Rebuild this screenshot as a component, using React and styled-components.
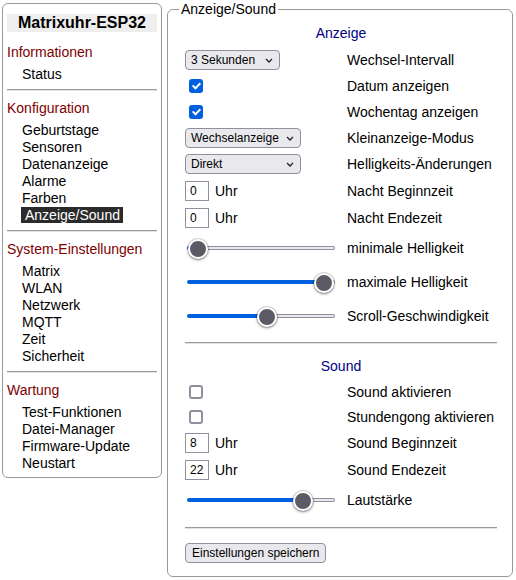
import React from "react";
import styled, { createGlobalStyle } from "styled-components";

const GlobalStyle = createGlobalStyle`
  html, body {
    margin: 0;
    padding: 0;
    background: #fff;
  }
  body {
    font-family: "Liberation Sans", Arial, sans-serif;
    font-size: 14px;
    color: #000;
  }
`;

const menu = [
  { title: "Informationen", items: ["Status"] },
  {
    title: "Konfiguration",
    items: ["Geburtstage", "Sensoren", "Datenanzeige", "Alarme", "Farben", "Anzeige/Sound"],
  },
  {
    title: "System-Einstellungen",
    items: ["Matrix", "WLAN", "Netzwerk", "MQTT", "Zeit", "Sicherheit"],
  },
  { title: "Wartung", items: ["Test-Funktionen", "Datei-Manager", "Firmware-Update", "Neustart"] },
];

export default function App() {
  return (
    <>
      <GlobalStyle />
      <Page>
        <Sidebar>
          <Title>Matrixuhr-ESP32</Title>
          {menu.map((section, i) => (
            <React.Fragment key={section.title}>
              {i > 0 && <Separator />}
              <SectionTitle>{section.title}</SectionTitle>
              <ItemList>
                {section.items.map((item) => (
                  <Item key={item}>
                    {item === "Anzeige/Sound" ? <ActiveItem>{item}</ActiveItem> : item}
                  </Item>
                ))}
              </ItemList>
            </React.Fragment>
          ))}
        </Sidebar>

        <Panel>
          <Legend>Anzeige/Sound</Legend>
          <Content>
            <Heading $h={26}>Anzeige</Heading>

            <Row $h={27}>
              <Cell>
                <Dropdown width={95} value="3 Sekunden" />
              </Cell>
              <Label>Wechsel-Intervall</Label>
            </Row>
            <Row $h={26}>
              <Cell>
                <Check type="checkbox" defaultChecked />
              </Cell>
              <Label>Datum anzeigen</Label>
            </Row>
            <Row $h={26}>
              <Cell>
                <Check type="checkbox" defaultChecked />
              </Cell>
              <Label>Wochentag anzeigen</Label>
            </Row>
            <Row $h={26}>
              <Cell>
                <Dropdown width={116} value="Wechselanzeige" />
              </Cell>
              <Label>Kleinanzeige-Modus</Label>
            </Row>
            <Row $h={26}>
              <Cell>
                <Dropdown width={116} value="Direkt" />
              </Cell>
              <Label>Helligkeits-Änderungen</Label>
            </Row>
            <Row $h={27}>
              <Cell>
                <HourInput type="text" defaultValue="0" />
                <Unit>Uhr</Unit>
              </Cell>
              <Label>Nacht Beginnzeit</Label>
            </Row>
            <Row $h={27}>
              <Cell>
                <HourInput type="text" defaultValue="0" />
                <Unit>Uhr</Unit>
              </Cell>
              <Label>Nacht Endezeit</Label>
            </Row>
            <Row $h={34}>
              <Cell>
                <Slider value={0} />
              </Cell>
              <Label>minimale Helligkeit</Label>
            </Row>
            <Row $h={34}>
              <Cell>
                <Slider value={100} />
              </Cell>
              <Label>maximale Helligkeit</Label>
            </Row>
            <Row $h={33}>
              <Cell>
                <Slider value={55} />
              </Cell>
              <Label>Scroll-Geschwindigkeit</Label>
            </Row>

            <Rule $h={22} />

            <Heading $h={25}>Sound</Heading>
            <Row $h={25}>
              <Cell>
                <Check type="checkbox" />
              </Cell>
              <Label>Sound aktivieren</Label>
            </Row>
            <Row $h={25}>
              <Cell>
                <Check type="checkbox" />
              </Cell>
              <Label>Stundengong aktivieren</Label>
            </Row>
            <Row $h={27}>
              <Cell>
                <HourInput type="text" defaultValue="8" />
                <Unit>Uhr</Unit>
              </Cell>
              <Label>Sound Beginnzeit</Label>
            </Row>
            <Row $h={27}>
              <Cell>
                <HourInput type="text" defaultValue="22" />
                <Unit>Uhr</Unit>
              </Cell>
              <Label>Sound Endezeit</Label>
            </Row>
            <Row $h={33}>
              <Cell>
                <Slider value={83} />
              </Cell>
              <Label>Lautstärke</Label>
            </Row>

            <Rule $h={24} />

            <ButtonRow>
              <SaveButton type="button">Einstellungen speichern</SaveButton>
            </ButtonRow>
          </Content>
        </Panel>
      </Page>
    </>
  );
}

function Dropdown({ width, value }) {
  return (
    <SelectWrap $w={width}>
      <Select defaultValue={value}>
        <option>{value}</option>
      </Select>
      <Chevron width="8" height="5" viewBox="0 0 8 5">
        <polyline points="1,1 4,4 7,1" fill="none" stroke="#222" strokeWidth="1.3" />
      </Chevron>
    </SelectWrap>
  );
}

function Slider({ value }) {
  // blue fill ends at thumb centre: track 148px, thumb 20px
  const pct = ((10 + (value / 100) * 128) / 148) * 100;
  return <Range type="range" min="0" max="100" defaultValue={value} style={{ "--pct": `${pct}%` }} />;
}

const Page = styled.div`
  display: flex;
  align-items: flex-start;
  gap: 5px;
  width: 516px;
  box-sizing: border-box;
  padding: 0 3px 0 2px;
`;

const Sidebar = styled.nav`
  flex: none;
  width: 160px;
  box-sizing: border-box;
  margin-top: 3px;
  padding: 10px 4px 5px;
  border: 1px solid #999;
  border-radius: 6px;
`;

const Title = styled.div`
  height: 18px;
  line-height: 18px;
  background: #eee;
  text-align: center;
  font-size: 16px;
  font-weight: bold;
  margin-bottom: 10px;
`;

const SectionTitle = styled.div`
  line-height: 20px;
  color: #800000;
  margin-bottom: 4px;
`;

const ItemList = styled.div`
  padding-left: 15px;
`;

const Item = styled.div`
  line-height: 17px;
`;

const ActiveItem = styled.span`
  display: inline-block;
  margin-left: -1px;
  padding: 0 3px 0 4px;
  line-height: 16px;
  background: #2b2b2b;
  color: #fff;
`;

const Separator = styled.div`
  margin: 6px 0 7px;
  border-top: 1px solid #9a9a9a;
  border-bottom: 1px solid #e2e2e2;
`;

const Panel = styled.fieldset`
  flex: 1;
  min-width: 0;
  margin: 1px 0 0;
  padding: 0 15px 10px 17px;
  border: 1px solid #999;
  border-radius: 6px;
`;

const Legend = styled.legend`
  margin-left: -6px;
  padding: 0 2px;
  font-size: 14px;
  line-height: 16px;
`;

const Content = styled.div`
  display: flex;
  flex-direction: column;
  padding-top: 3px;
`;

const Heading = styled.div`
  height: ${(p) => p.$h}px;
  line-height: ${(p) => p.$h}px;
  text-align: center;
  color: #000080;
`;

const Row = styled.div`
  display: grid;
  grid-template-columns: 162px 1fr;
  align-items: center;
  height: ${(p) => p.$h}px;
`;

const Cell = styled.div`
  display: flex;
  align-items: center;
`;

const Label = styled.div`
  white-space: nowrap;
`;

const Rule = styled.div`
  display: flex;
  align-items: center;
  height: ${(p) => p.$h}px;

  &::before {
    content: "";
    flex: 1;
    border-top: 1px solid #9a9a9a;
    border-bottom: 1px solid #e2e2e2;
  }
`;

const SelectWrap = styled.span`
  position: relative;
  display: inline-flex;
  width: ${(p) => p.$w}px;
`;

const Select = styled.select`
  appearance: none;
  width: 100%;
  height: 20px;
  box-sizing: border-box;
  margin: 0;
  padding: 0 18px 0 5px;
  font: 12px "Liberation Sans", Arial, sans-serif;
  color: #000;
  background: #e9e9ed;
  border: 1px solid #8f8f9d;
  border-radius: 4px;
  outline: none;
`;

const Chevron = styled.svg`
  position: absolute;
  right: 7px;
  top: 8px;
  pointer-events: none;
`;

const Check = styled.input`
  appearance: none;
  position: relative;
  width: 14px;
  height: 14px;
  box-sizing: border-box;
  margin: 0 0 0 4px;
  background: #fff;
  border: 2px solid #8f8f9d;
  border-radius: 3px;

  &:checked {
    background: #0060df;
    border-color: #0060df;
  }

  &:checked::after {
    content: "";
    position: absolute;
    left: 3px;
    top: 0px;
    width: 3px;
    height: 6px;
    border: solid #fff;
    border-width: 0 2px 2px 0;
    transform: rotate(45deg);
  }
`;

const HourInput = styled.input`
  width: 24px;
  height: 20px;
  box-sizing: border-box;
  margin: 0;
  padding: 0 0 0 4px;
  font: 12px "Liberation Sans", Arial, sans-serif;
  color: #000;
  border: 1px solid #8f8f9d;
  border-radius: 0;
  outline: none;
`;

const Unit = styled.span`
  margin-left: 6px;
`;

const Range = styled.input`
  -webkit-appearance: none;
  appearance: none;
  width: 148px;
  height: 22px;
  margin: 0 0 0 2px;
  background: transparent;

  &::-webkit-slider-runnable-track {
    height: 4px;
    border: 1px solid transparent;
    border-radius: 3px;
    background:
      linear-gradient(to right, #0060df var(--pct), transparent var(--pct)) border-box,
      linear-gradient(#e9e9ed, #e9e9ed) padding-box,
      linear-gradient(#8f8f9d, #8f8f9d) border-box;
  }

  &::-webkit-slider-thumb {
    -webkit-appearance: none;
    box-sizing: border-box;
    width: 20px;
    height: 20px;
    margin-top: -8px;
    border-radius: 50%;
    background: #5b5b66;
    border: 2px solid #fff;
    box-shadow: 0 0 0 1px rgba(0, 0, 0, 0.12), 0 1px 3px rgba(0, 0, 0, 0.45);
  }
`;

const ButtonRow = styled.div`
  display: flex;
  align-items: center;
  height: 26px;
`;

const SaveButton = styled.button`
  height: 20px;
  box-sizing: border-box;
  margin: 0;
  padding: 0 6px;
  font: 12px "Liberation Sans", Arial, sans-serif;
  color: #000;
  background: #e9e9ed;
  border: 1px solid #8f8f9d;
  border-radius: 4px;
`;
